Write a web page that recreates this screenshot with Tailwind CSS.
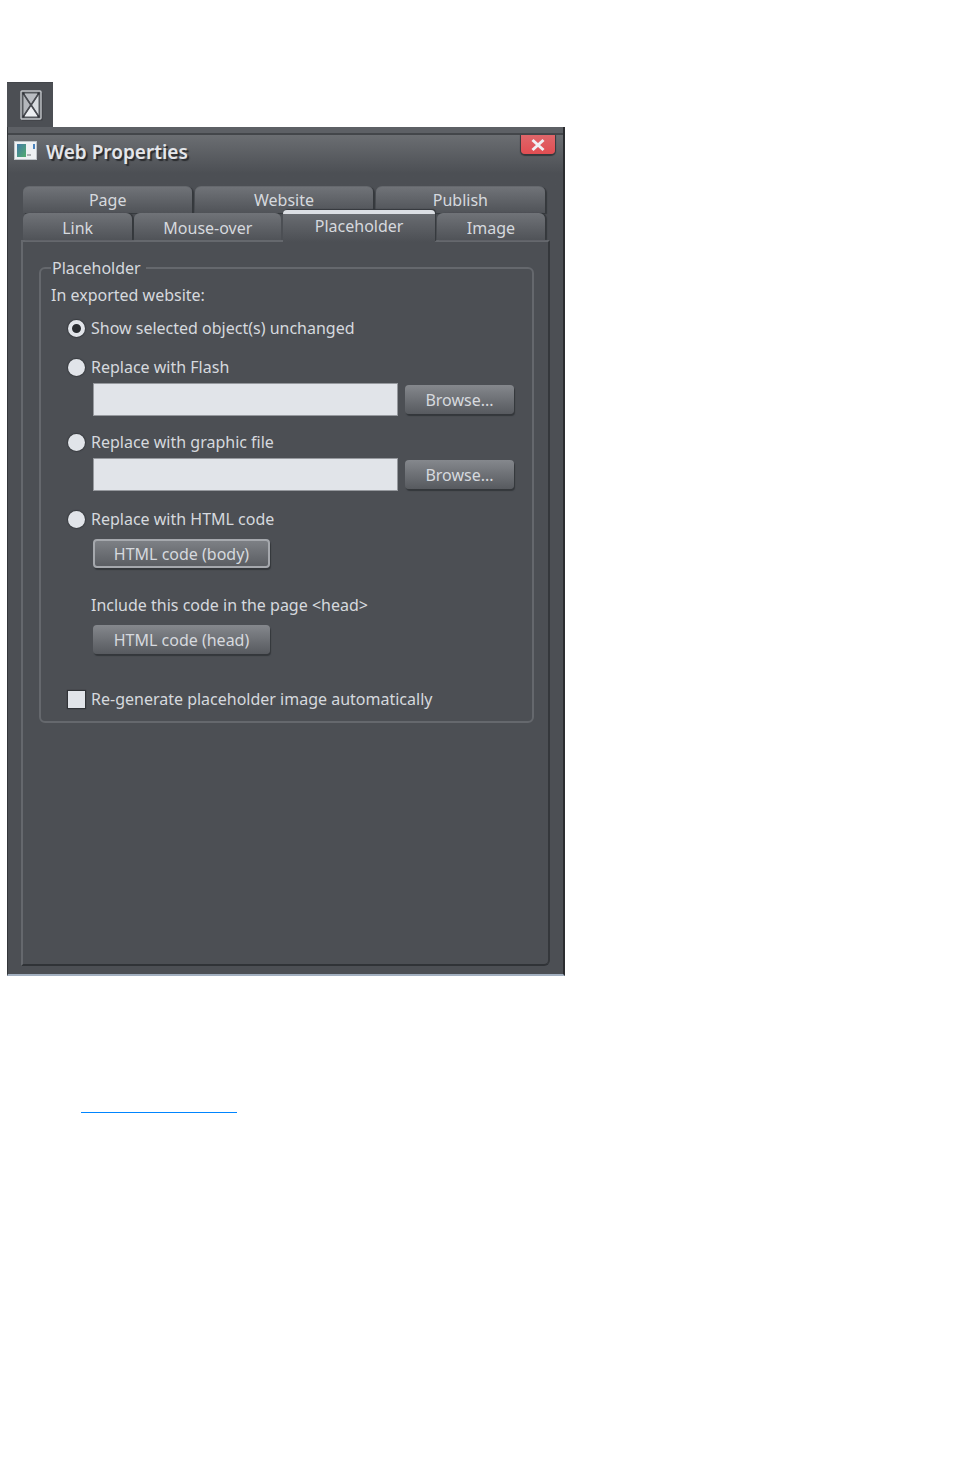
<!DOCTYPE html>
<html lang="en">
  <head>
    <meta charset="UTF-8" />
    <meta name="viewport" content="width=device-width, initial-scale=1.0" />
    <title>Web Properties</title>
    <script src="https://cdn.jsdelivr.net/npm/@tailwindcss/browser@4"></script>
  </head>
  <body class="bg-white min-h-screen px-[7px] pt-[82px] font-['Noto_Sans',sans-serif] text-base leading-6 text-[#d6d9de]">
    <!-- Toolbar button -->
    <button type="button" aria-label="Placeholder" class="flex w-[46px] h-[45px] items-center justify-center pl-[2px] bg-[#4c4f54] border-t border-[#43464b]">
      <svg class="w-6 h-8" viewBox="0 0 24 32" fill="none">
        <path d="M3 30.5H22.5V4" stroke="#3a3d41" stroke-width="2" />
        <rect x="2" y="2" width="20" height="28" rx="1" fill="#55585d" stroke="#c3c6ca" stroke-width="1.4" />
        <path d="M5 4.500H19L12 15Z" fill="#babdc2" />
        <path d="M5 27.500H19L12 17Z" fill="#eceef1" />
        <path d="M4.500 6V26L11 16Z" fill="#b4b7bc" />
        <path d="M19.500 6V26L13 16Z" fill="#d8dbdf" />
        <path d="M4 4L20 28M20 4L4 28" stroke="#484b50" stroke-width="1.4" />
        <path d="M3.500 3.500h2v2h-2zM18.500 3.500h2v2h-2zM3.500 26.500h2v2h-2zM18.500 26.500h2v2h-2z" fill="#303338" />
      </svg>
    </button>

    <!-- Dialog -->
    <main class="max-w-[558px] bg-[#4c4f54] border-l border-r-2 border-l-[#33363a] border-r-[#2b2d30] border-b-2 border-b-[#a3b0c0]">
      <div class="h-[6px] bg-[#5d6065]"></div>
      <header class="flex h-[53px] items-start justify-between pl-[6px] pr-[8px] border-t-2 border-[#43464a] bg-linear-to-b from-[#6b6e72] to-[#4c4f54] to-75%">
        <div class="flex items-center gap-[9px] pt-[3px]">
          <svg class="w-[23px] h-[19px] mb-1" viewBox="0 0 23 19">
            <rect x="0.5" y="0.5" width="22" height="18" fill="#eef1f3" stroke="#bfc4c8" />
            <defs>
              <linearGradient id="thumb" x1="0" y1="0" x2="1" y2="1">
                <stop offset="0" stop-color="#4279a8" />
                <stop offset="1" stop-color="#52ad6d" />
              </linearGradient>
            </defs>
            <rect x="3" y="3" width="9" height="13" fill="url(#thumb)" />
            <path d="M20 3V8" stroke="#4a83bd" stroke-width="2" />
            <path d="M13 14H17" stroke="#aeb2b5" stroke-width="2" />
          </svg>
          <h1 class="text-[19px] leading-7 font-semibold text-[#e4e6ea] [text-shadow:2px_2px_1px_#292b2e]">Web Properties</h1>
        </div>
        <button type="button" aria-label="Close" class="flex w-[34px] h-[19px] items-center justify-center rounded-b bg-linear-to-b from-[#df666a] to-[#e14d52] shadow-[0_1px_1px_1px_#35383c]">
          <svg class="w-4 h-4" viewBox="0 0 16 16" stroke="#f0f1f4" stroke-width="3"><path d="M2.5 3L13.5 13M13.5 3L2.5 13" /></svg>
        </button>
      </header>

      <!-- Tabs, in two rows -->
      <nav class="ml-[15px] mr-[18px]">
        <div class="grid grid-cols-[169fr_177fr_169fr] gap-[3px]">
          <button type="button" class="h-[27px] rounded-t-md bg-linear-to-b from-[#707378] to-[#505358] border-t border-[#65686d] shadow-[2px_1px_1px_#35383c]">Page</button>
          <button type="button" class="h-[27px] rounded-t-md bg-linear-to-b from-[#707378] to-[#505358] border-t border-[#65686d] shadow-[2px_1px_1px_#35383c]">Website</button>
          <button type="button" class="h-[27px] rounded-t-md bg-linear-to-b from-[#707378] to-[#505358] border-t border-[#65686d] shadow-[2px_1px_1px_#35383c]">Publish</button>
        </div>
        <div class="grid grid-cols-[109fr_147fr_151fr_108fr] items-end gap-x-[2px]">
          <button type="button" class="h-[27px] pt-[2px] rounded-t-md bg-linear-to-b from-[#707378] to-[#505358] shadow-[2px_0_1px_#35383c]">Link</button>
          <button type="button" class="h-[27px] pt-[2px] rounded-t-md bg-linear-to-b from-[#707378] to-[#505358]">Mouse-over</button>
          <button type="button" class="relative h-[32px] -mt-[5px] -mb-[2px] pb-[6px] rounded-t-sm border-t-4 border-[#dcdfe4] bg-linear-to-b from-[#696c71] to-[#4c4f54] shadow-[1px_-1px_1px_#35383c]">Placeholder</button>
          <button type="button" class="h-[27px] pt-[2px] rounded-t-md bg-linear-to-b from-[#707378] to-[#505358] shadow-[2px_0_1px_#35383c]">Image</button>
        </div>
      </nav>

      <!-- Tab panel -->
      <section class="mx-[13px] mb-[8px] min-h-[726px] pl-[16px] pr-[14px] pt-[14px] border-2 rounded-br-md border-t-[#65686d] border-l-[#65686d] border-r-[#34373b] border-b-[#303337]">
        <fieldset class="rounded-md border-2 border-[#65686d] pl-[10px] pr-[18px] pb-[10px]">
          <legend class="pl-[1px] pr-[5px]">Placeholder</legend>
          <p class="mt-[3px]">In exported website:</p>

          <div class="pl-[17px]">
            <label class="flex mt-[9px] items-center gap-[6px]">
              <input type="radio" name="export" checked class="appearance-none w-[17px] h-[17px] rounded-full bg-[#e1e4e9] checked:border-4 checked:border-[#e1e4e9] checked:bg-[#292c30] shadow-[0_0_1px_1px_#393c40]" />
              Show selected object(s) unchanged
            </label>

            <label class="flex mt-[15px] items-center gap-[6px]">
              <input type="radio" name="export" class="appearance-none w-[17px] h-[17px] rounded-full bg-[#e1e4e9] checked:border-4 checked:border-[#e1e4e9] checked:bg-[#292c30] shadow-[0_0_1px_1px_#393c40]" />
              Replace with Flash
            </label>
            <div class="flex mt-[4px] ml-[25px] items-center gap-[7px]">
              <input type="text" aria-label="Flash file" class="min-w-0 grow h-[33px] px-2 bg-[#e1e4e9] border border-[#96999e] text-[#292c30]" />
              <button type="button" class="w-[109px] h-[29px] rounded bg-linear-to-b from-[#85888d] to-[#575a5f] shadow-[1px_2px_1px_#34373b]">Browse...</button>
            </div>

            <label class="flex mt-[14px] items-center gap-[6px]">
              <input type="radio" name="export" class="appearance-none w-[17px] h-[17px] rounded-full bg-[#e1e4e9] checked:border-4 checked:border-[#e1e4e9] checked:bg-[#292c30] shadow-[0_0_1px_1px_#393c40]" />
              Replace with graphic file
            </label>
            <div class="flex mt-[4px] ml-[25px] items-center gap-[7px]">
              <input type="text" aria-label="Graphic file" class="min-w-0 grow h-[33px] px-2 bg-[#e1e4e9] border border-[#96999e] text-[#292c30]" />
              <button type="button" class="w-[109px] h-[29px] rounded bg-linear-to-b from-[#85888d] to-[#575a5f] shadow-[1px_2px_1px_#34373b]">Browse...</button>
            </div>

            <label class="flex mt-[16px] items-center gap-[6px]">
              <input type="radio" name="export" class="appearance-none w-[17px] h-[17px] rounded-full bg-[#e1e4e9] checked:border-4 checked:border-[#e1e4e9] checked:bg-[#292c30] shadow-[0_0_1px_1px_#393c40]" />
              Replace with HTML code
            </label>
            <button type="button" class="block mt-[8px] ml-[25px] w-[177px] h-[29px] rounded border-2 border-[#a5a8ad] bg-linear-to-b from-[#7d8085] to-[#5b5e63] shadow-[1px_2px_1px_#34373b]">HTML code (body)</button>

            <p class="mt-[25px] ml-[23px]">Include this code in the page &lt;head&gt;</p>
            <button type="button" class="block mt-[8px] ml-[25px] w-[177px] h-[29px] rounded bg-linear-to-b from-[#85888d] to-[#575a5f] shadow-[1px_2px_1px_#34373b]">HTML code (head)</button>

            <label class="flex mt-[33px] items-center gap-[6px]">
              <input type="checkbox" class="appearance-none w-[17px] h-[17px] bg-[#e1e4e9] checked:border-4 checked:border-[#e1e4e9] checked:bg-[#292c30] shadow-[0_0_1px_1px_#303337]" />
              Re-generate placeholder image automatically
            </label>
          </div>
        </fieldset>
      </section>
    </main>

    <a href="#" aria-label="More information" class="block mt-[119px] ml-[74px] w-[156px] h-[18px] border-b border-b-[#0085ff]"></a>
  </body>
</html>
